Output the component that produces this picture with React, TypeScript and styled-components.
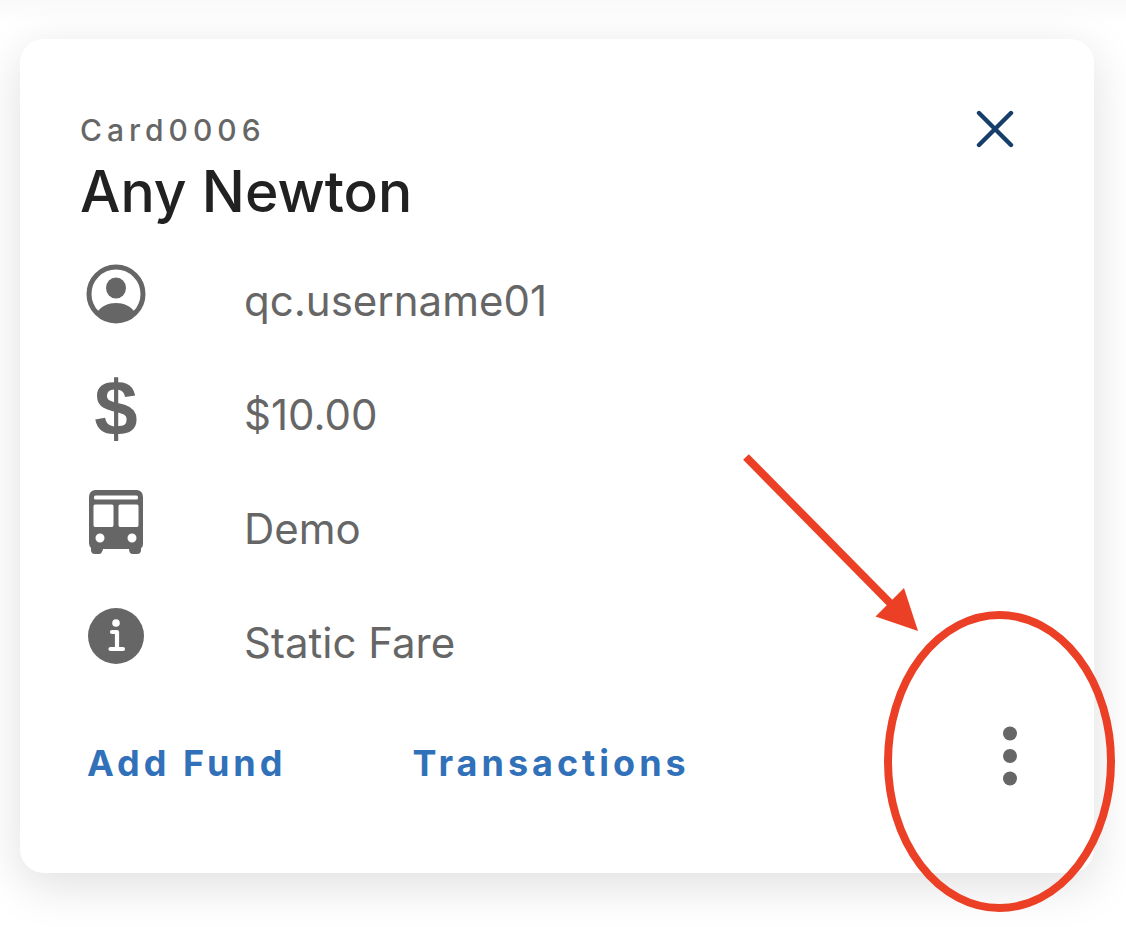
import React from "react";
import styled, { createGlobalStyle } from "styled-components";

const GlobalStyle = createGlobalStyle`
  *, *::before, *::after { box-sizing: border-box; }
  body {
    margin: 0;
    background: #fff linear-gradient(#f9f9f9, #fff 24px) no-repeat;
    font-family: Inter, "Liberation Sans", sans-serif;
    overflow-x: hidden;
  }
`;

const Page = styled.main`
  padding: 39px 32px 54px 20px;
`;

const Card = styled.article`
  position: relative;
  padding: 72px 60px 85px;
  border-radius: 24px;
  background: #fff;
  box-shadow: 0 12px 48px rgba(0, 0, 0, 0.13);
`;

const CardHeader = styled.header`
  display: flex;
  justify-content: space-between;
  align-items: flex-start;
`;

const Subtitle = styled.p`
  margin: 0;
  color: #666;
  font-size: 30px;
  font-weight: 500;
  line-height: 38px;
  letter-spacing: 5px;
`;

const Title = styled.h1`
  margin: 0;
  color: #212121;
  font-size: 57px;
  font-weight: 500;
  line-height: 86px;
`;

const IconButton = styled.button<{ $width: number; $height: number }>`
  display: flex;
  align-items: center;
  justify-content: center;
  width: ${({ $width }) => $width}px;
  height: ${({ $height }) => $height}px;
  padding: 0;
  border: 0;
  background: none;
  cursor: pointer;
`;

const Details = styled.ul`
  margin: 2px 0 0;
  padding: 0;
  list-style: none;
`;

const DetailRow = styled.li`
  display: flex;
  align-items: center;
  height: 114px;
  color: #666;
`;

const IconCell = styled.span`
  display: flex;
  justify-content: center;
  width: 72px;
  margin-right: 92px;
`;

const Dollar = styled.span`
  font-family: "Liberation Sans", sans-serif;
  font-size: 78px;
  font-weight: 700;
  line-height: 76px;
`;

const DetailText = styled.span`
  padding-top: 14px;
  font-size: 42px;
  line-height: 50px;
`;

const CardFooter = styled.footer`
  display: flex;
  align-items: center;
  justify-content: space-between;
  padding-top: 31px;
`;

const Actions = styled.div`
  display: flex;
  gap: 126px;
  padding: 14px 0 0 7px;
`;

const ActionButton = styled.button`
  padding: 0;
  border: 0;
  background: none;
  color: #3171b9;
  font: inherit;
  font-size: 36px;
  font-weight: 700;
  line-height: 44px;
  letter-spacing: 4px;
  cursor: pointer;
`;

const Callout = styled.svg`
  position: absolute;
  right: -22px;
  bottom: -39px;
  pointer-events: none;
`;

const UserIcon = () => (
  <svg width="60" height="60" viewBox="0 0 60 60" aria-hidden="true">
    <circle cx="30" cy="30" r="27" fill="none" stroke="currentColor" strokeWidth="5" />
    <ellipse cx="30" cy="24" rx="10" ry="10.5" fill="currentColor" />
    <path d="M11 48C16 42 22 39 30 39s14 3 19 9c-5 6-12 9-19 9s-14-3-19-9Z" fill="currentColor" />
  </svg>
);

const BusIcon = () => (
  <svg width="56" height="64" viewBox="0 0 56 64" aria-hidden="true">
    <path
      fill="currentColor"
      fillRule="evenodd"
      d="M7 0H49Q55 1 55 7V54Q55 57 53 58V60Q53 64 49 64H45Q41 64 41 59H15Q14 64 11 64H7Q3 64 3 60V58Q1 56 1 53V7Q1 1 7 0ZM7.500 5.500Q6 5.500 6 7V8Q6 9.500 7.500 9.500H48.500Q50 9.500 50 8V7Q50 5.500 48.500 5.500ZM7 14.500Q5.500 14.500 5.500 16V35Q5.500 37 7 37H24Q25.500 37 25.500 35V16Q25.500 14.500 24 14.500ZM32 14.500Q30.500 14.500 30.500 16V35Q30.500 37 32 37H49Q50.500 37 50.500 35V16Q50.500 14.500 49 14.500ZM12 43.500A4.500 4.500 0 1 0 12 52.500A4.500 4.500 0 1 0 12 43.500ZM44 43.500A4.500 4.500 0 1 0 44 52.500A4.500 4.500 0 1 0 44 43.500Z"
    />
  </svg>
);

const InfoIcon = () => (
  <svg width="56" height="56" viewBox="0 0 56 56" aria-hidden="true">
    <circle cx="28" cy="28" r="28" fill="currentColor" />
    <circle cx="28" cy="15" r="3.800" fill="#fff" />
    <path
      d="M24 24h5v17M22.500 41h12.500"
      fill="none"
      stroke="#fff"
      strokeWidth="4.200"
      strokeLinecap="round"
      strokeLinejoin="round"
    />
  </svg>
);

const details = [
  { icon: <UserIcon />, text: "qc.username01" },
  { icon: <Dollar aria-hidden="true">$</Dollar>, text: "$10.00" },
  { icon: <BusIcon />, text: "Demo" },
  { icon: <InfoIcon />, text: "Static Fare" },
];

export default function App() {
  return (
    <>
      <GlobalStyle />
      <Page>
        <Card>
          <CardHeader>
            <div>
              <Subtitle>Card0006</Subtitle>
              <Title>Any Newton</Title>
            </div>
            <IconButton type="button" aria-label="Close" $width={78} $height={36}>
              <svg width="38" height="38" viewBox="0 0 38 38" aria-hidden="true">
                <path d="M3 3 35 35M35 3 3 35" stroke="#163e6b" strokeWidth="4.400" strokeLinecap="round" />
              </svg>
            </IconButton>
          </CardHeader>
          <Details>
            {details.map(({ icon, text }) => (
              <DetailRow key={text}>
                <IconCell>{icon}</IconCell>
                <DetailText>{text}</DetailText>
              </DetailRow>
            ))}
          </Details>
          <CardFooter>
            <Actions>
              <ActionButton type="button">Add Fund</ActionButton>
              <ActionButton type="button">Transactions</ActionButton>
            </Actions>
            <IconButton type="button" aria-label="More options" $width={48} $height={64}>
              <svg width="16" height="60" viewBox="0 0 16 60" fill="#666" aria-hidden="true">
                <circle cx="8" cy="7.500" r="7" />
                <circle cx="8" cy="30" r="7" />
                <circle cx="8" cy="52.500" r="7" />
              </svg>
            </IconButton>
          </CardFooter>
          <Callout width="380" height="460" viewBox="736 452 380 460" aria-hidden="true">
            <path d="M746 457 892 605" stroke="#eb4025" strokeWidth="8" />
            <path d="M918 631 904 588 875.500 616.500Z" fill="#eb4025" />
            <ellipse cx="999.500" cy="761.500" rx="111.500" ry="146.500" fill="none" stroke="#eb4025" strokeWidth="8" />
          </Callout>
        </Card>
      </Page>
    </>
  );
}
